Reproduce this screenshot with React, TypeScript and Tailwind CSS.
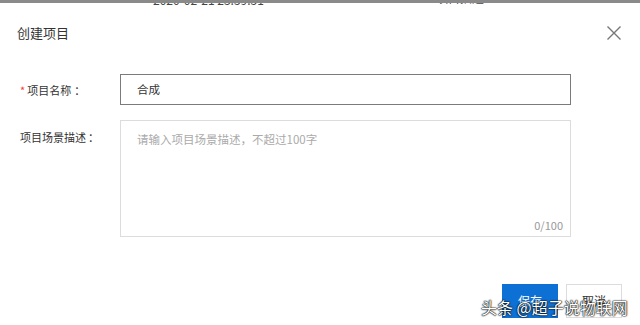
import React from 'react'

const font = { fontFamily: '"Noto Sans CJK SC", "Noto Sans", sans-serif' }

const App = () => {
  return (
    <div className="relative w-[640px] h-[325px] overflow-hidden bg-white text-[#333]" style={font}>
      {/* dimmed page behind the dialog */}
      <div className="relative h-[6px] overflow-hidden bg-white">
        <div className="flex -mt-[7px] text-[12px] leading-[14px] text-[#444]">
          <span className="ml-[153px]">2020-02-21 23:59:51</span>
          <span className="ml-[172px] -mt-[2px]">项目描述</span>
        </div>
        <div className="absolute inset-x-0 top-0 h-[3px] bg-[#8a8a8a]" />
      </div>

      <div className="flex h-[53px] items-center justify-between pl-[17px] pr-[18px]">
        <h2 className="text-[13px] leading-[20px] text-[#333]">创建项目</h2>
        <button className="text-[#777]">
          <svg width="16" height="16" viewBox="0 0 16 16" fill="none" stroke="currentColor" strokeWidth="1.4">
            <path d="M1.5 1.5 L14.5 14.5 M14.5 1.5 L1.5 14.5" />
          </svg>
        </button>
      </div>

      <div className="mt-[15px] flex items-center">
        <label className="w-[120px] pl-[20px] text-[11px] leading-[18px]">
          <span className="text-[#f04134] mr-[2px]">*</span>项目名称<span className="ml-[3px]">：</span>
        </label>
        <div className="w-[451px] h-[31px] border border-[#7b7b7b] px-[16px] flex items-center text-[11.5px]">
          合成
        </div>
      </div>

      <div className="mt-[15px] flex items-start">
        <label className="w-[120px] pl-[20px] pt-[8px] text-[11px] leading-[18px]">
          项目场景描述<span className="ml-[2px]">：</span>
        </label>
        <div className="relative w-[451px] h-[117px] border border-[#dcdcdc] px-[16px] pt-[9px] text-[11.5px] leading-[18px] text-[#aaa]">
          请输入项目场景描述，不超过100字
          <span className="absolute bottom-[2px] right-[7px] text-[11px] text-[#999]">0/100</span>
        </div>
      </div>

      <div className="mt-[47px] flex justify-end gap-[8px] pr-[18px]">
        <button className="w-[56px] h-[34px] bg-[#0d70d5] text-white text-[12px]">保存</button>
        <button className="w-[56px] h-[34px] border border-[#dcdcdc] bg-white text-[#333] text-[12px]">取消</button>
      </div>

      <div
        className="absolute left-[481px] top-[297px] text-[16px] leading-[20px] text-white whitespace-nowrap"
        style={{ textShadow: '0 0 2px #000, 0 0 1px #000, 0 0 1px #000' }}
      >
        头条 @超子说物联网
      </div>
    </div>
  )
}

export default App
